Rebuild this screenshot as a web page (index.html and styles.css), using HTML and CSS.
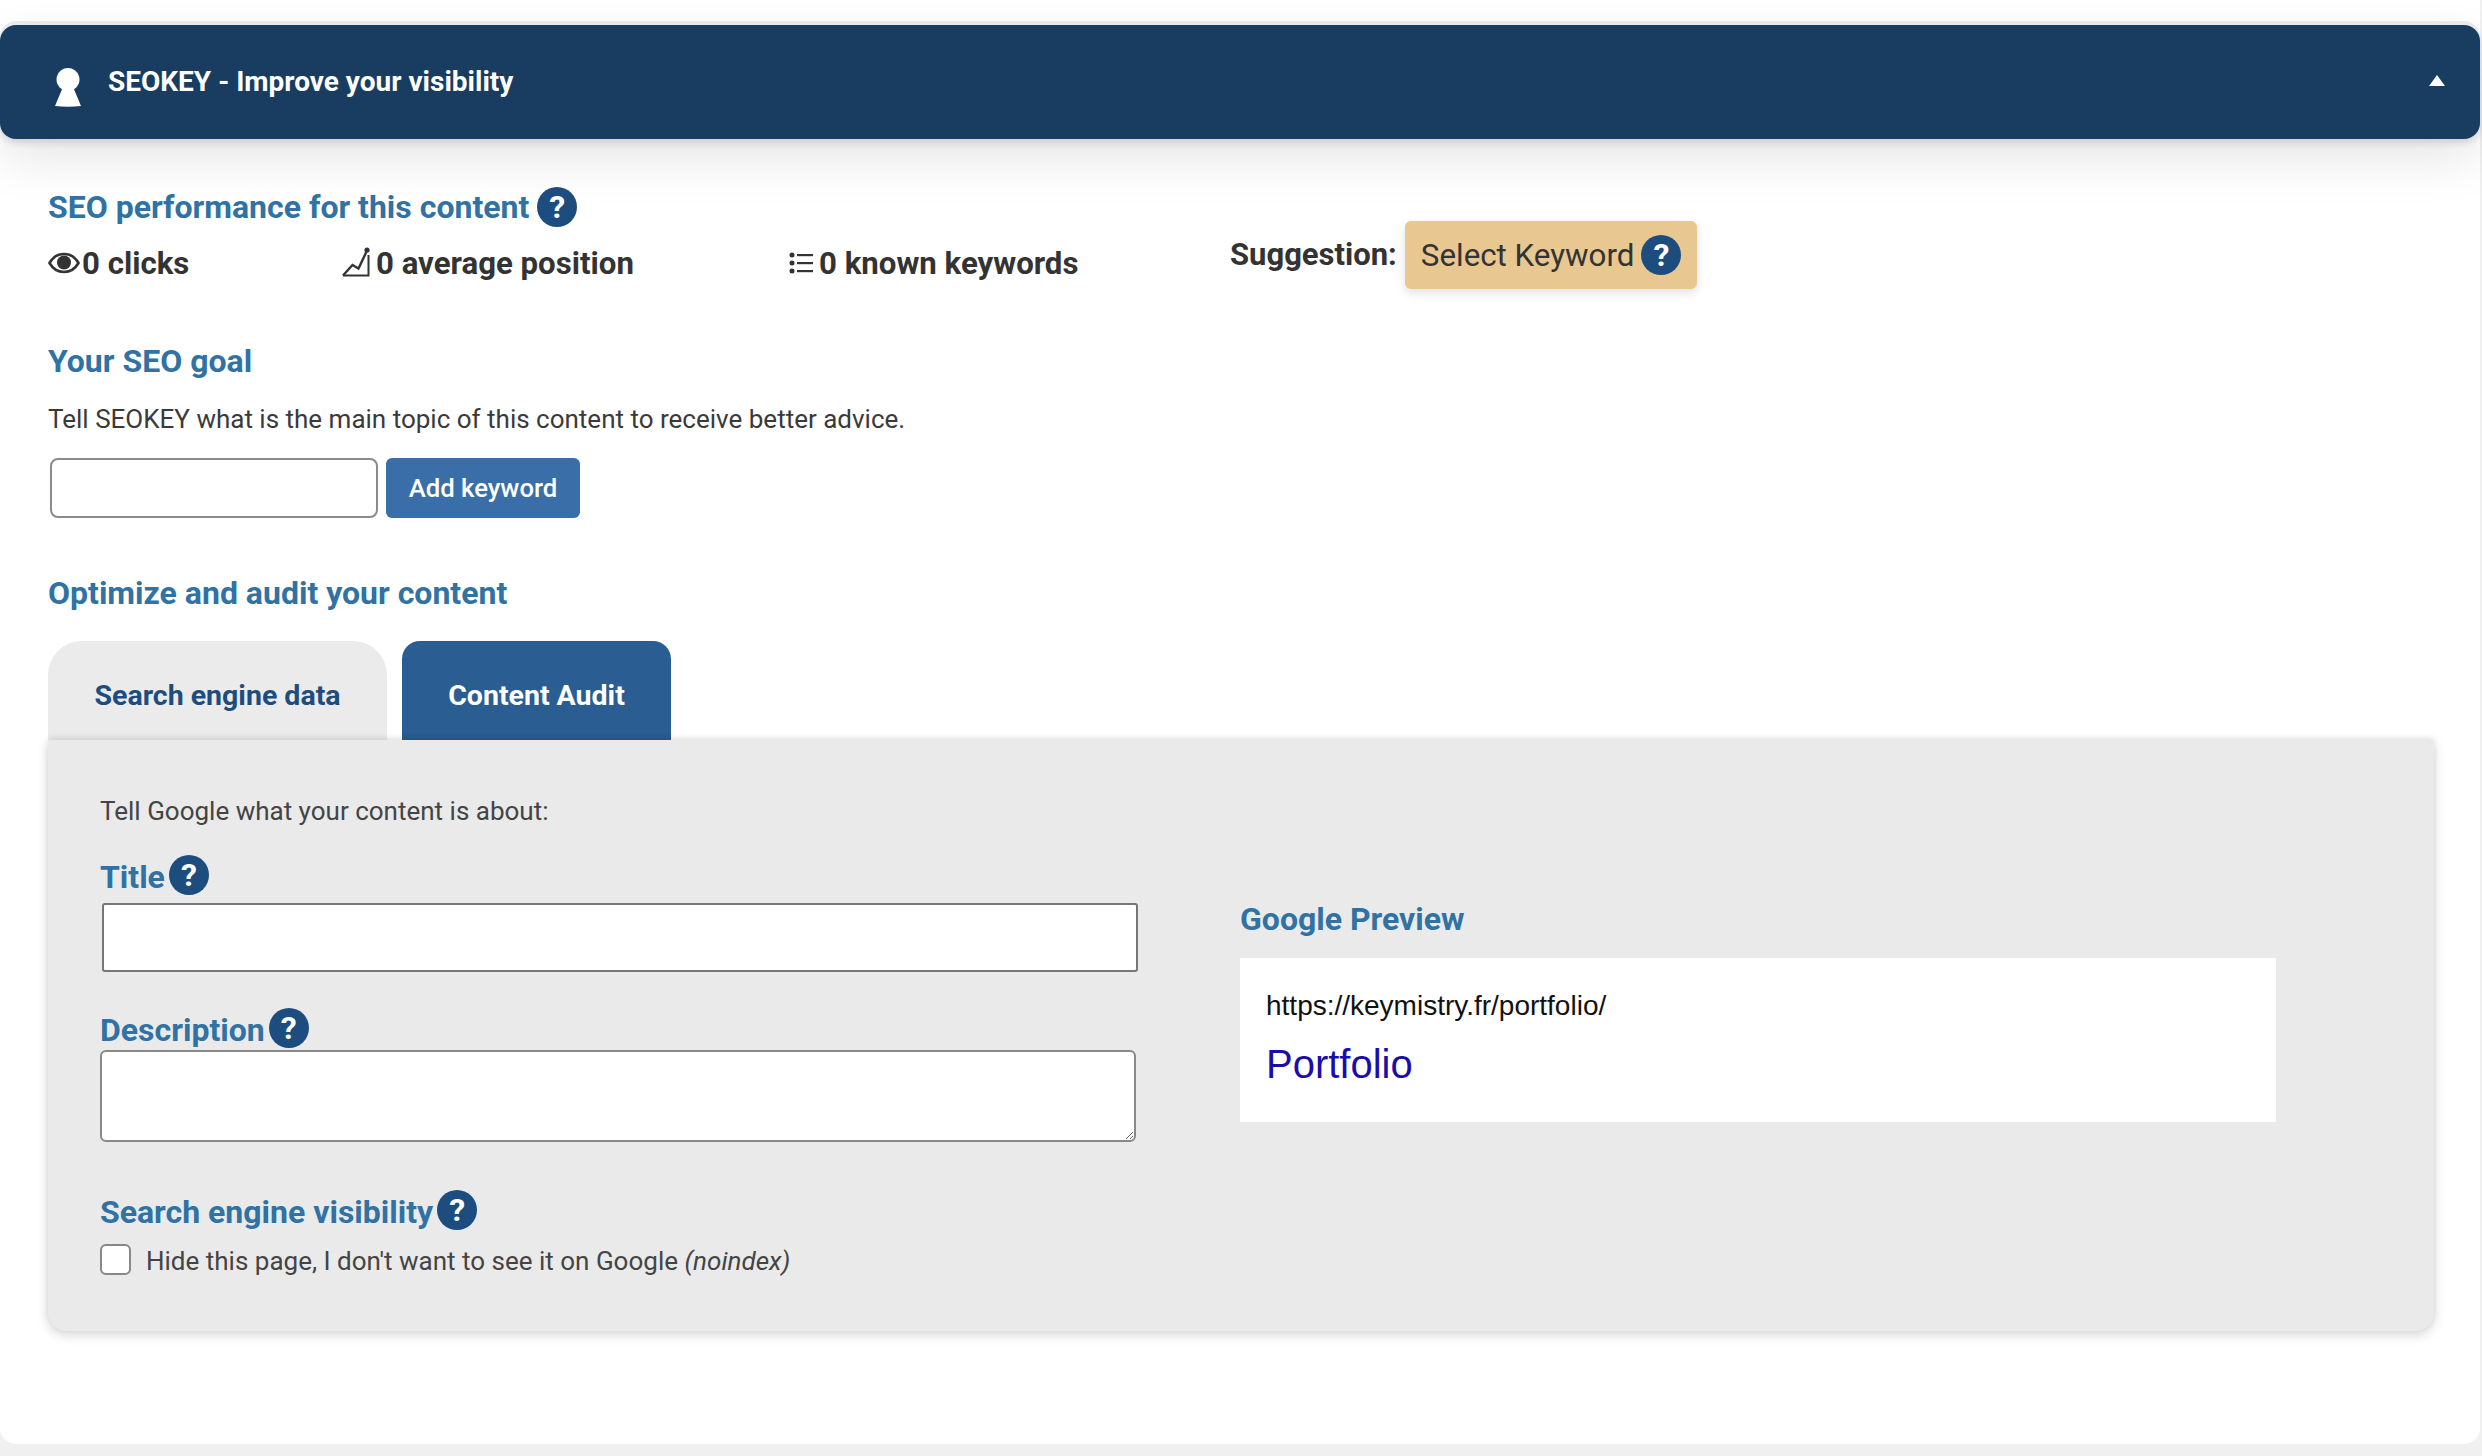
FILE: index.html
```html
<!DOCTYPE html>
<html lang="en">
<head>
<meta charset="utf-8">
<title>SEOKEY</title>
<link rel="stylesheet" href="styles.css">
</head>
<body>
<main class="metabox">
  <header class="bar">
    <svg class="keyhole" viewBox="0 0 26 39" width="26" height="39"><path d="M13 0a11.500 11.500 0 0 1 6 21.300L26 38q-13 1.500-26 0l7-16.700A11.500 11.500 0 0 1 13 0z" fill="#fff"/></svg>
    <h1 class="bar-title">SEOKEY - Improve your visibility</h1>
    <span class="caret"></span>
  </header>
  <div class="content">
    <h2 class="heading heading-perf">SEO performance for this content <span class="help">?</span></h2>
    <div class="stats">
      <div class="stat"><svg class="stat-icon stat-icon-eye" viewBox="0 0 32 22" width="32" height="22"><path d="M1.500 11C5 5 10 2 16 2s11 3 14.500 9C27 17 22 20 16 20S5 17 1.500 11z" fill="none" stroke="#333" stroke-width="2.600"/><circle cx="16" cy="10.500" r="7" fill="#333"/></svg>0 clicks</div>
      <div class="stat"><svg class="stat-icon stat-icon-chart" viewBox="0 0 28 30" width="28" height="30"><path d="M1 28.500H26.500V8" fill="none" stroke="#333" stroke-width="2"/><path d="M1 28.500 10.500 18l6 3.500L25 3.500" fill="none" stroke="#333" stroke-width="2.400"/><circle cx="25" cy="3" r="2.600" fill="#333"/></svg>0 average position</div>
      <div class="stat"><svg class="stat-icon stat-icon-list" viewBox="0 0 24 24" width="24" height="24"><g fill="#333"><circle cx="3" cy="4" r="2.500"/><circle cx="3" cy="12" r="2.500"/><circle cx="3" cy="20" r="2.500"/><rect x="8" y="3" width="16" height="2.200"/><rect x="8" y="11" width="16" height="2.200"/><rect x="8" y="19" width="16" height="2.200"/></g></svg>0 known keywords</div>
      <div class="suggestion"><span class="suggestion-label">Suggestion:</span><span class="badge">Select Keyword <span class="help">?</span></span></div>
    </div>
    <h2 class="heading heading-goal">Your SEO goal</h2>
    <p class="lead">Tell SEOKEY what is the main topic of this content to receive better advice.</p>
    <div class="keyword-row">
      <input class="keyword-input" type="text" aria-label="Keyword">
      <button class="keyword-btn" type="button">Add keyword</button>
    </div>
    <h2 class="heading heading-audit">Optimize and audit your content</h2>
    <div class="tabs">
      <div class="tab tab-light">Search engine data</div>
      <div class="tab tab-dark">Content Audit</div>
    </div>
    <section class="panel">
      <div class="panel-main">
        <p class="panel-lead">Tell Google what your content is about:</p>
        <label class="field-label label-title">Title<span class="help">?</span></label>
        <input class="title-input" type="text" aria-label="Title">
        <label class="field-label label-desc">Description<span class="help">?</span></label>
        <textarea class="desc-input" aria-label="Description"></textarea>
        <label class="field-label label-vis">Search engine visibility<span class="help">?</span></label>
        <div class="check-row"><input class="check" type="checkbox" id="noindex"><label for="noindex">Hide this page, I don't want to see it on Google <em>(noindex)</em></label></div>
      </div>
      <aside class="preview">
        <h3 class="heading preview-heading">Google Preview</h3>
        <div class="preview-box">
          <div class="preview-url">https://keymistry.fr/portfolio/</div>
          <div class="preview-title">Portfolio</div>
        </div>
      </aside>
    </section>
  </div>
</main>
</body>
</html>
```
FILE: styles.css
```css
* { box-sizing: border-box; }
html, body { margin: 0; padding: 0; }
body {
  min-height: 1456px;
  background: #f0f0f1;
  font-family: Roboto, "Liberation Sans", sans-serif;
  color: #333;
  overflow: hidden;
}
.metabox {
  width: 2480px;
  height: 1444px;
  padding-top: 25px;
  background: #fff;
  border-radius: 0 0 16px 16px;
}
.bar {
  height: 114px;
  display: flex;
  align-items: center;
  padding: 0 35px 0 55px;
  background: #183d60;
  border-radius: 16px;
  box-shadow: 0 -4px 0 #e9e9e9, 0 4px 6px rgba(40,50,90,.15), 0 20px 50px rgba(0,0,0,.1);
}
.keyhole { margin-top: 10px; flex: none; }
.bar-title {
  margin: 0 0 2px 27px;
  font-size: 28px;
  font-weight: 700;
  color: #fff;
  flex: 1;
}
.caret {
  width: 0; height: 0;
  border-left: 8px solid transparent;
  border-right: 8px solid transparent;
  border-bottom: 11px solid #fff;
  margin-bottom: 3px;
}
.content { padding: 0 47px 0 48px; }
.heading {
  margin: 0;
  font-size: 32px;
  line-height: 40px;
  font-weight: 700;
  color: #2f72a3;
  display: flex;
  align-items: center;
}
.help {
  display: inline-flex;
  align-items: center;
  justify-content: center;
  width: 40px;
  height: 40px;
  border-radius: 50%;
  background: #1d4d7e;
  color: #fff;
  font-size: 32px;
  font-weight: 700;
  line-height: 1;
  flex: none;
}
.heading-perf { margin-top: 48px; white-space: pre; }
.stats {
  display: grid;
  grid-template-columns: 294px 447px 441px auto;
  margin-top: -6px;
  height: 68px;
  align-items: center;
}
.stat {
  display: flex;
  align-items: center;
  font-size: 31.200px;
  font-weight: 700;
  margin-top: 16px;
}
.stat-icon { flex: none; }
.stat-icon-eye { margin-right: 2px; }
.stat-icon-chart { margin-right: 6px; margin-top: -3px; }
.stat-icon-list { margin-right: 6px; }
.suggestion { display: flex; align-items: center; gap: 8px; margin-top: -1px; }
.suggestion-label { font-size: 31px; font-weight: 700; }
.badge {
  display: flex;
  align-items: center;
  gap: 7px;
  height: 68px;
  margin-top: 1px;
  padding: 0 16px;
  background: #e8c790;
  border-radius: 6px;
  font-size: 31.300px;
  box-shadow: 0 4px 10px rgba(0,0,0,.12);
}
.heading-goal { margin-top: 52px; }
.lead { margin: 18px 0 0; font-size: 26px; line-height: 40px; color: #3a3a3a; }
.keyword-row { display: flex; align-items: center; margin: 19px 0 0 2px; gap: 8px; height: 60px; }
.keyword-input {
  width: 328px;
  height: 60px;
  border: 2px solid #8a8a8a;
  border-radius: 8px;
  background: #fff;
}
.keyword-btn {
  width: 194px;
  height: 60px;
  border: 0;
  border-radius: 6px;
  background: #3a6ea8;
  color: #fff;
  font: 500 25.700px Roboto, sans-serif;
}
.heading-audit { margin-top: 55px; }
.tabs { display: flex; gap: 15px; margin-top: 28px; height: 99px; }
.tab {
  height: 99px;
  display: flex;
  align-items: center;
  justify-content: center;
  padding-top: 9px;
  font-size: 28.500px;
  font-weight: 700;
}
.tab-light { width: 339px; background: #ebebec; color: #1d4d7e; border-radius: 34px 34px 0 0; }
.tab-dark { width: 269px; background: #2a5d92; color: #fff; border-radius: 18px 18px 0 0; }
.panel {
  display: flex;
  width: 2386px;
  height: 591px;
  padding-left: 52px;
  background: #eaeaeb;
  border-radius: 0 0 18px 18px;
  box-shadow: 0 4px 12px rgba(0,0,0,.16), 0 -2px 6px rgba(0,0,0,.08);
  position: relative;
  color: #444;
}
.panel-main { width: 1091px; flex: none; }
.panel-lead { margin: 0; padding-top: 54px; font-size: 26px; line-height: 34px; }
.field-label {
  display: flex;
  align-items: center;
  gap: 4px;
  font-size: 32px;
  font-weight: 700;
  color: #2f72a3;
  height: 40px;
}
.field-label .help { margin-top: -4px; }
.label-title { margin-top: 29px; }
.title-input {
  display: block;
  width: 1036px;
  height: 69px;
  margin: 6px 0 0 2px;
  border: 2px solid #777;
  border-radius: 3px;
  background: #fff;
}
.label-desc { margin-top: 38px; }
.desc-input {
  display: block;
  width: 1036px;
  height: 92px;
  margin: 0;
  border: 2px solid #888;
  border-radius: 6px;
  background: #fff;
  resize: vertical;
}
.label-vis { margin-top: 50px; }
.check-row { display: flex; align-items: center; gap: 15px; margin-top: 11px; font-size: 26px; }
.check {
  appearance: none;
  width: 31px;
  height: 31px;
  margin: 0;
  border: 2px solid #888;
  border-radius: 6px;
  background: #fff;
}
.check-row label { padding-top: 3px; }
.preview { width: 1036px; margin-left: 49px; padding-top: 159px; }
.preview-heading { height: 40px; }
.preview-box { height: 164px; margin-top: 19px; padding: 30px 26px 0; background: #fff; font-family: "Liberation Sans", Arial, sans-serif; }
.preview-url { font-size: 28px; line-height: 36px; color: #111; }
.preview-title { margin-top: 16px; font-size: 40px; line-height: 48px; color: #1a0dab; }
```
